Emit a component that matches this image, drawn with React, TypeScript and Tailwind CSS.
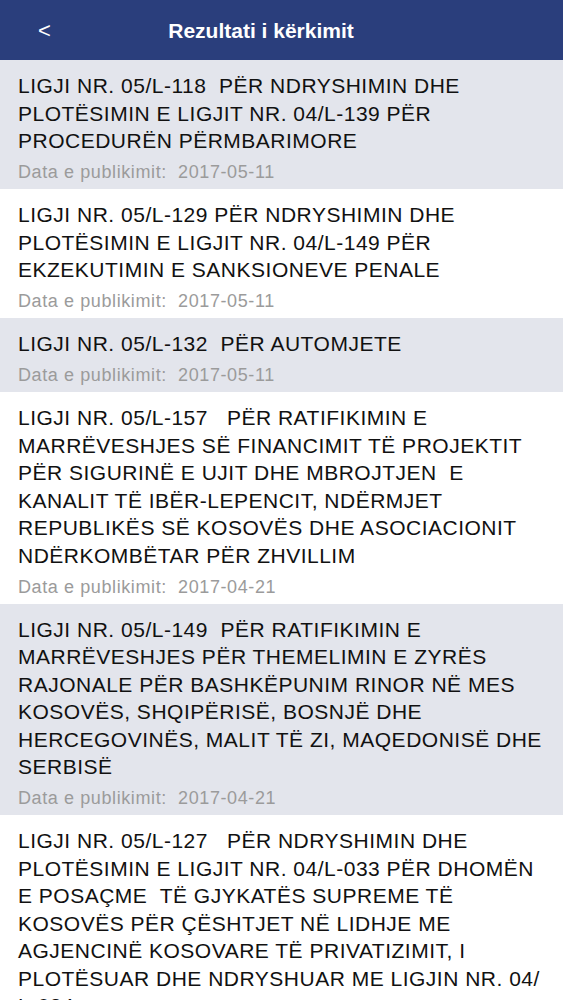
import React from 'react';

type Law = { lines: string[]; date: string };

const laws: Law[] = [
  {
    lines: ['LIGJI NR. 05/L-118  PËR NDRYSHIMIN DHE', 'PLOTËSIMIN E LIGJIT NR. 04/L-139 PËR', 'PROCEDURËN PËRMBARIMORE'],
    date: '2017-05-11',
  },
  {
    lines: ['LIGJI NR. 05/L-129 PËR NDRYSHIMIN DHE', 'PLOTËSIMIN E LIGJIT NR. 04/L-149 PËR', 'EKZEKUTIMIN E SANKSIONEVE PENALE'],
    date: '2017-05-11',
  },
  {
    lines: ['LIGJI NR. 05/L-132  PËR AUTOMJETE'],
    date: '2017-05-11',
  },
  {
    lines: [
      'LIGJI NR. 05/L-157   PËR RATIFIKIMIN E',
      'MARRËVESHJES SË FINANCIMIT TË PROJEKTIT',
      'PËR SIGURINË E UJIT DHE MBROJTJEN  E',
      'KANALIT TË IBËR-LEPENCIT, NDËRMJET',
      'REPUBLIKËS SË KOSOVËS DHE ASOCIACIONIT',
      'NDËRKOMBËTAR PËR ZHVILLIM',
    ],
    date: '2017-04-21',
  },
  {
    lines: [
      'LIGJI NR. 05/L-149  PËR RATIFIKIMIN E',
      'MARRËVESHJES PËR THEMELIMIN E ZYRËS',
      'RAJONALE PËR BASHKËPUNIM RINOR NË MES',
      'KOSOVËS, SHQIPËRISË, BOSNJË DHE',
      'HERCEGOVINËS, MALIT TË ZI, MAQEDONISË DHE',
      'SERBISË',
    ],
    date: '2017-04-21',
  },
  {
    lines: [
      'LIGJI NR. 05/L-127   PËR NDRYSHIMIN DHE',
      'PLOTËSIMIN E LIGJIT NR. 04/L-033 PËR DHOMËN',
      'E POSAÇME  TË GJYKATËS SUPREME TË',
      'KOSOVËS PËR ÇËSHTJET NË LIDHJE ME',
      'AGJENCINË KOSOVARE TË PRIVATIZIMIT, I',
      'PLOTËSUAR DHE NDRYSHUAR ME LIGJIN NR. 04/',
      'L-034',
    ],
    date: '2017-04-21',
  },
];

const App: React.FC = () => {
  return (
    <div className="w-[563px] h-[1000px] overflow-hidden bg-white font-['Liberation_Sans',Arial,sans-serif]">
      {/* Navigation bar */}
      <div className="h-[60px] bg-[#2a3e7c] flex items-center relative text-white">
        <span className="absolute left-[38px] top-[16px] text-[22px] leading-[30px]">&lt;</span>
        <div className="flex-1 text-center text-[21px] font-semibold pt-[1px] pr-[41px]">Rezultati i kërkimit</div>
      </div>

      {/* Results */}
      <div className="flex flex-col">
        {laws.map((law, i) => (
          <div
            key={i}
            className={`pl-[18px] pr-2 pt-3 pb-[6px] ${i % 2 === 0 ? 'bg-[#e3e5ec]' : 'bg-white'}`}
          >
            <div className="text-[21px] leading-[27.5px] tracking-[0.5px] text-[#111] whitespace-pre">
              {law.lines.map((line, j) => (
                <div key={j}>{line}</div>
              ))}
            </div>
            <div className="mt-[6.5px] text-[18px] leading-[22px] tracking-[0.6px] text-[#9b9b9b] whitespace-pre">
              {'Data e publikimit:  ' + law.date}
            </div>
          </div>
        ))}
      </div>
    </div>
  );
};

export default App;
